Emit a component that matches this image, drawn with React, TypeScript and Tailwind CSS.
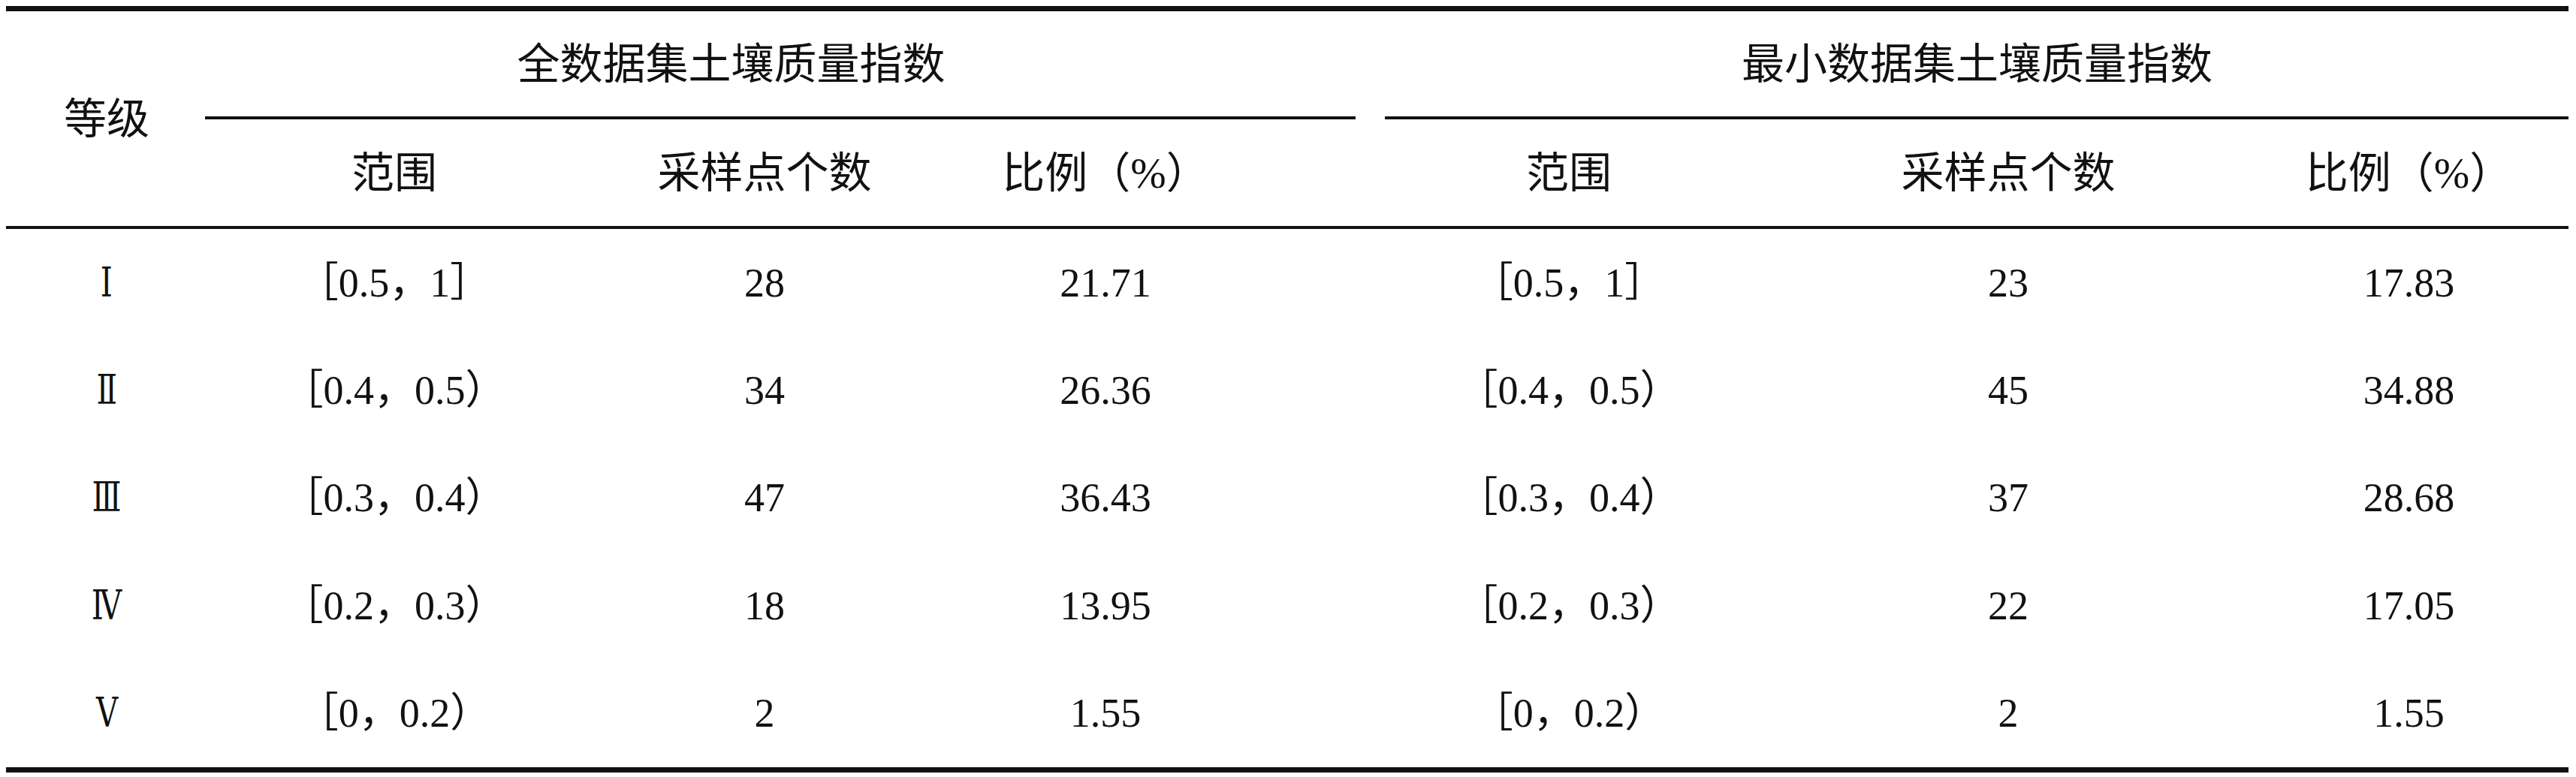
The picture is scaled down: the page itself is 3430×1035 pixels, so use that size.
import React from 'react';

const rows = [
  { grade: 'Ⅰ', r1: '［0.5，1］', n1: '28', p1: '21.71', r2: '［0.5，1］', n2: '23', p2: '17.83' },
  { grade: 'Ⅱ', r1: '［0.4，0.5）', n1: '34', p1: '26.36', r2: '［0.4，0.5）', n2: '45', p2: '34.88' },
  { grade: 'Ⅲ', r1: '［0.3，0.4）', n1: '47', p1: '36.43', r2: '［0.3，0.4）', n2: '37', p2: '28.68' },
  { grade: 'Ⅳ', r1: '［0.2，0.3）', n1: '18', p1: '13.95', r2: '［0.2，0.3）', n2: '22', p2: '17.05' },
  { grade: 'Ⅴ', r1: '［0，0.2）', n1: '2', p1: '1.55', r2: '［0，0.2）', n2: '2', p2: '1.55' },
];

const grid = 'grid grid-cols-[268px_498px_488px_563px_528px_642px_425px]';

export default function App() {
  return (
    <div
      className="w-[3430px] h-[1035px] bg-white pt-[8px] pl-[8px] text-[#111]"
      style={{ fontFamily: '"Liberation Serif", "Noto Sans CJK SC", serif' }}
    >
      <div className="w-[3412px] border-t-[7px] border-b-[7px] border-[#111]">
        {/* Header */}
        <div className={`${grid} grid-rows-[140px_4px_142px] border-b-[4px] border-[#111] text-[57px] leading-none`}>
          <div className="row-span-3 flex items-center justify-center">等级</div>
          <div className="col-span-3 flex items-center justify-center pr-[154px]">全数据集土壤质量指数</div>
          <div className="col-span-3 flex items-center justify-center pl-[20px]">最小数据集土壤质量指数</div>
          <div className="col-span-3 mr-[20px] -ml-[3px] bg-[#111]"></div>
          <div className="col-span-3 ml-[19px] bg-[#111]"></div>
          <div className="flex items-center justify-center">范围</div>
          <div className="flex items-center justify-center">采样点个数</div>
          <div className="flex items-center justify-center pr-[143px]">比例（%）</div>
          <div className="flex items-center justify-center">范围</div>
          <div className="flex items-center justify-center">采样点个数</div>
          <div className="flex items-center justify-center">比例（%）</div>
        </div>

        {/* Body */}
        {rows.map((row) => (
          <div key={row.grade} className={`${grid} h-[143.4px] text-[54px] leading-none`}>
            <div className="flex items-center justify-center">
              <span className="inline-block scale-x-75" style={{ fontFamily: '"DejaVu Serif", "Noto Sans CJK SC", serif' }}>
                {row.grade}
              </span>
            </div>
            <div className="flex items-center justify-center">{row.r1}</div>
            <div className="flex items-center justify-center">{row.n1}</div>
            <div className="flex items-center justify-center pr-[143px]">{row.p1}</div>
            <div className="flex items-center justify-center">{row.r2}</div>
            <div className="flex items-center justify-center">{row.n2}</div>
            <div className="flex items-center justify-center">{row.p2}</div>
          </div>
        ))}
      </div>
    </div>
  );
}
